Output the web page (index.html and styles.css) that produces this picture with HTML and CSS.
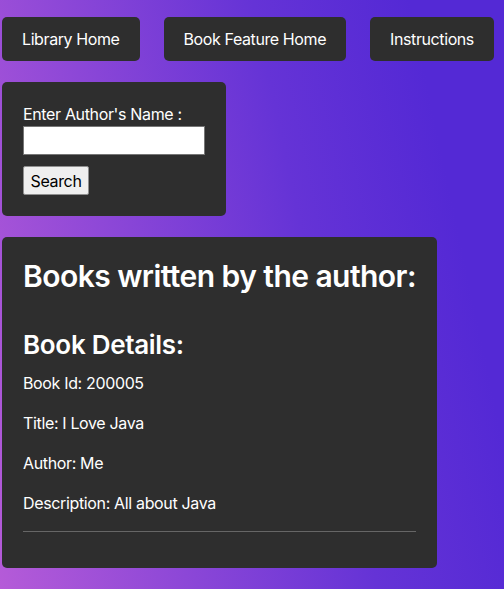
FILE: index.html
```html
<!DOCTYPE html>
<html>
<head>
<meta charset="utf-8">
<link rel="stylesheet" href="styles.css">
</head>
<body>
<div class="page">
  <nav class="nav">
    <button class="nav-btn">Library Home</button>
    <button class="nav-btn">Book Feature Home</button>
    <button class="nav-btn">Instructions</button>
  </nav>
  <form class="card search-card">
    <label class="label" for="author">Enter Author's Name :</label>
    <input class="input" id="author" type="text">
    <button class="search-btn" type="button">Search</button>
  </form>
  <section class="card result-card">
    <h2 class="title">Books written by the author:</h2>
    <h3 class="subtitle">Book Details:</h3>
    <p class="line">Book Id: 200005</p>
    <p class="line">Title: I Love Java</p>
    <p class="line">Author: Me</p>
    <p class="line">Description: All about Java</p>
    <hr class="rule">
  </section>
</div>
</body>
</html>
```

FILE: styles.css
```css
html, body {
  margin: 0;
  height: 100%;
}
body {
  background: linear-gradient(78deg, #b55bd8 0%, #8c47d7 30%, #6533d6 60%, #5429d5 85%);
  font-family: Inter, "Noto Sans", sans-serif;
  color: #fff;
  letter-spacing: -0.35px;
}
.page {
  display: flex;
  flex-direction: column;
  align-items: flex-start;
  gap: 21px;
  padding: 17px 2px;
}
.nav {
  display: flex;
  gap: 24px;
}
.nav-btn {
  flex-shrink: 0;
  white-space: nowrap;
  height: 44px;
  padding: 0 20px;
  background: #2e2e2e;
  color: #fff;
  border: none;
  border-radius: 5px;
  font-family: Inter, "Noto Sans", sans-serif;
  font-size: 16px;
  letter-spacing: -0.4px;
}
.card {
  background: #2e2e2e;
  border-radius: 5px;
  padding: 21px;
}
.search-card {
  display: flex;
  flex-direction: column;
  align-items: flex-start;
  padding-top: 22px;
}
.label {
  font-size: 16px;
  line-height: 20px;
}
.input {
  width: 182px;
  height: 29px;
  box-sizing: border-box;
  margin-top: 2px;
  border: 1px solid #767676;
  background: #fff;
  padding: 0 4px;
}
.search-btn {
  margin-top: 11px;
  width: 66px;
  height: 29px;
  background: #efefef;
  border: 1px solid #8f8f8f;
  border-radius: 2px;
  font-family: Inter, "Noto Sans", sans-serif;
  font-size: 16px;
  letter-spacing: -0.35px;
  color: #000;
  padding: 0;
}
.title {
  margin: 0 0 35px;
  font-size: 30px;
  line-height: 36px;
  font-weight: 600;
  letter-spacing: -0.55px;
  white-space: nowrap;
}
.subtitle {
  margin: 0 0 11px;
  font-size: 26px;
  line-height: 31px;
  font-weight: 600;
  letter-spacing: -0.3px;
}
.line {
  margin: 0 0 16px;
  font-size: 16px;
  line-height: 24px;
}
.rule {
  margin: 15px 0 15px;
  border: none;
  border-top: 1px solid #666;
}
```
